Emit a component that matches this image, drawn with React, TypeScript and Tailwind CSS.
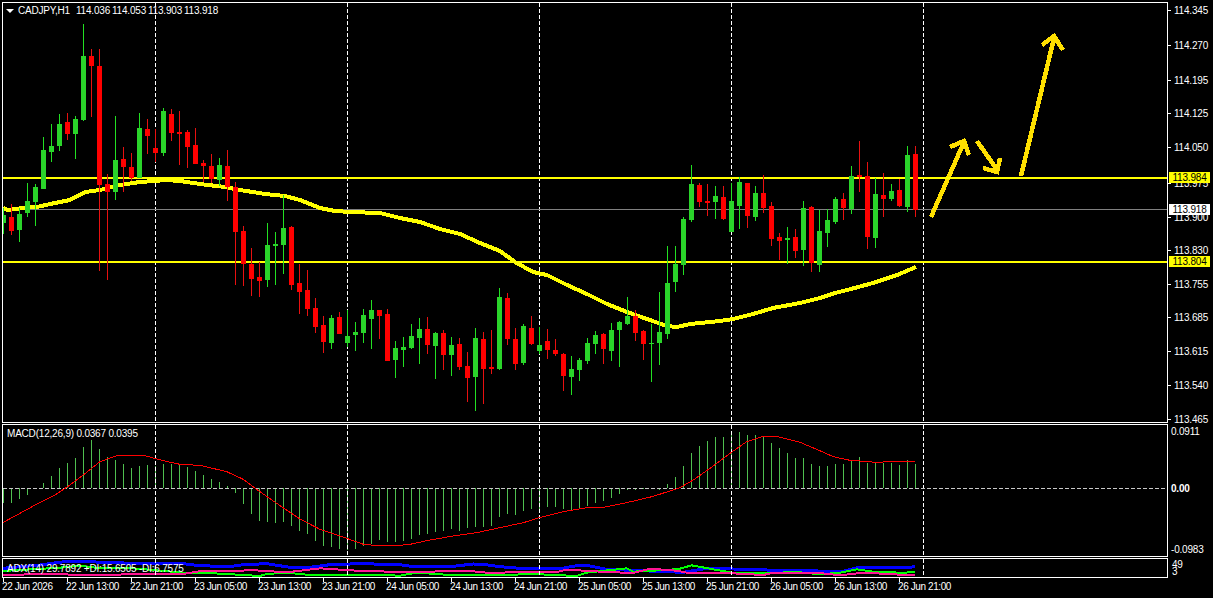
// CADJPY H1 chart with MACD and ADX sub windows
type Candle = [number, number, number, number, "g" | "r"];
type Point = [number, number];

// wick top, wick bottom, body top, body bottom (page pixels), one every 8px from x=3
const candles: Candle[] = [
  [208, 234, 215, 223, "g"], [204, 235, 217, 231, "r"], [208, 242, 214, 230, "g"], [183, 217, 201, 213, "g"],
  [184, 226, 187, 202, "g"], [137, 189, 150, 189, "g"], [124, 162, 146, 152, "g"], [114, 151, 124, 146, "g"],
  [113, 140, 122, 134, "r"], [116, 159, 119, 134, "g"], [24, 121, 56, 120, "g"], [49, 117, 56, 66, "r"],
  [49, 271, 66, 185, "r"], [174, 280, 184, 192, "r"], [116, 200, 160, 192, "g"], [147, 192, 159, 167, "r"],
  [153, 181, 167, 178, "r"], [113, 178, 128, 178, "g"], [119, 154, 129, 136, "r"], [129, 162, 148, 153, "r"],
  [108, 156, 111, 153, "g"], [109, 141, 114, 133, "r"], [111, 165, 132, 134, "r"], [130, 168, 132, 147, "r"],
  [128, 164, 145, 164, "r"], [160, 182, 163, 166, "r"], [154, 183, 166, 179, "r"], [158, 186, 165, 180, "g"],
  [150, 201, 166, 187, "r"], [182, 285, 187, 232, "r"], [226, 286, 231, 264, "r"], [248, 296, 264, 279, "r"],
  [262, 297, 277, 281, "r"], [223, 287, 245, 280, "g"], [232, 285, 244, 246, "g"], [195, 274, 228, 245, "g"],
  [226, 290, 227, 285, "r"], [264, 314, 283, 292, "r"], [270, 316, 290, 309, "r"], [298, 333, 308, 327, "r"],
  [316, 353, 325, 342, "r"], [315, 349, 318, 343, "g"], [312, 334, 317, 334, "r"], [310, 347, 336, 343, "g"],
  [322, 351, 332, 335, "g"], [309, 343, 315, 333, "g"], [300, 349, 310, 319, "g"], [310, 339, 310, 316, "r"],
  [309, 361, 314, 361, "r"], [341, 378, 348, 360, "g"], [337, 367, 347, 350, "g"], [324, 349, 336, 348, "g"],
  [318, 364, 329, 338, "g"], [317, 354, 329, 345, "r"], [332, 379, 333, 346, "g"], [330, 370, 333, 355, "r"],
  [337, 376, 345, 355, "g"], [338, 370, 344, 367, "r"], [352, 402, 366, 378, "r"], [328, 411, 338, 377, "g"],
  [332, 404, 339, 369, "r"], [330, 374, 367, 369, "r"], [288, 370, 297, 369, "g"], [293, 345, 298, 339, "r"],
  [328, 370, 339, 364, "r"], [324, 365, 326, 363, "g"], [316, 345, 328, 344, "r"], [327, 354, 345, 351, "g"],
  [329, 359, 341, 350, "r"], [339, 356, 350, 354, "r"], [353, 391, 354, 376, "r"], [356, 395, 369, 377, "g"],
  [358, 381, 360, 370, "g"], [338, 364, 343, 361, "g"], [331, 354, 335, 344, "g"], [333, 364, 334, 349, "r"],
  [323, 361, 330, 351, "g"], [321, 367, 322, 330, "g"], [297, 325, 316, 324, "g"], [310, 341, 316, 333, "r"],
  [330, 360, 331, 344, "r"], [324, 382, 343, 344, "g"], [292, 365, 332, 343, "g"], [246, 339, 283, 334, "g"],
  [246, 292, 264, 282, "g"], [217, 275, 219, 265, "g"], [165, 222, 184, 220, "g"], [183, 207, 185, 202, "r"],
  [184, 216, 201, 203, "r"], [186, 219, 196, 202, "g"], [186, 220, 197, 219, "r"], [183, 232, 201, 232, "g"],
  [177, 229, 182, 206, "g"], [183, 228, 183, 216, "r"], [186, 221, 193, 217, "g"], [175, 213, 193, 208, "r"],
  [202, 246, 206, 239, "r"], [233, 260, 237, 241, "r"], [227, 264, 238, 240, "g"], [229, 258, 237, 251, "r"],
  [201, 266, 208, 250, "g"], [206, 272, 207, 263, "r"], [210, 272, 231, 265, "g"], [209, 247, 220, 233, "g"],
  [197, 224, 199, 222, "g"], [193, 220, 199, 208, "r"], [166, 214, 176, 209, "g"], [141, 192, 175, 177, "r"],
  [162, 249, 176, 237, "r"], [178, 248, 194, 238, "g"], [173, 217, 195, 199, "r"], [184, 201, 191, 199, "g"],
  [179, 207, 190, 206, "r"], [146, 212, 155, 207, "g"], [146, 217, 154, 210, "r"],
];

const ma: Point[] = [
  [3, 208], [8, 210], [15, 209], [30, 207], [37, 207], [50, 204], [70, 200], [85, 192], [100, 190], [120, 185],
  [140, 182], [155, 181], [165, 180], [180, 181], [200, 184], [225, 187], [240, 190], [265, 194], [285, 196],
  [300, 200], [320, 208], [335, 211], [350, 212], [380, 213], [400, 218], [420, 222], [440, 229], [460, 234],
  [480, 243], [500, 251], [515, 262], [533, 272], [547, 275], [567, 285], [587, 294], [607, 304], [627, 312],
  [647, 319], [667, 326], [677, 327], [690, 324], [720, 321], [733, 319], [753, 314], [773, 308], [800, 303],
  [820, 298], [835, 293], [847, 290], [873, 283], [897, 275], [916, 267],
];

// histogram tops in the 3x crop scale (y = 420 + v / 3), zero sits at 488
const histogram = [
  250, 248, 236, 225, 208, 189, 168, 144, 129, 114, 81, 60, 87, 111, 120, 132, 144, 138, 135, 138, 132, 132, 135, 141,
  153, 165, 177, 186, 198, 219, 252, 282, 303, 306, 309, 306, 318, 333, 342, 363, 378, 381, 387, 390, 387, 378, 372,
  360, 366, 366, 363, 357, 345, 342, 336, 333, 327, 333, 324, 321, 321, 318, 291, 282, 285, 273, 267, 267, 261, 261,
  267, 270, 267, 258, 249, 243, 234, 222, 210, 210, 207, 207, 210, 192, 171, 138, 99, 78, 63, 51, 51, 42, 36, 45, 45,
  50, 69, 84, 99, 114, 114, 132, 138, 138, 132, 132, 123, 111, 129, 129, 129, 129, 135, 120, 132,
];

const scaled = (x0: number, pts: Point[]): Point[] => pts.map(([x, y]) => [x0 + x / 3, 420 + y / 3]);

const signal: Point[] = [
  ...scaled(0, [[10, 307], [100, 258], [160, 228], [200, 202], [250, 165], [300, 125], [350, 107], [430, 106], [490, 122], [540, 133], [600, 136], [680, 155], [730, 178], [770, 208], [830, 250], [900, 297], [960, 328], [1040, 355], [1090, 373], [1150, 378]]),
  ...scaled(400, [[0, 376], [30, 373], [90, 360], [160, 348], [230, 338], [290, 325], [370, 308], [418, 293], [490, 275], [560, 263], [610, 262], [680, 248], [760, 229], [840, 203], [880, 180], [930, 145], [990, 100], [1040, 65], [1090, 49], [1130, 49]]),
  ...scaled(800, [[0, 67], [50, 88], [100, 110], [150, 121], [210, 125], [230, 128], [260, 125], [345, 125]]),
];

const adxBlue: Point[] = [
  ...scaled(0, [[10, 445], [60, 440], [120, 435], [200, 424], [260, 425], [400, 430], [540, 430], [600, 437], [690, 440], [730, 434], [800, 431], [870, 442], [930, 442], [990, 434], [1080, 431]]),
  ...scaled(400, [[0, 434], [40, 440], [150, 440], [220, 432], [250, 433], [300, 440], [370, 446], [480, 446], [530, 437], [570, 438], [620, 448], [720, 452], [850, 457], [920, 445], [1000, 447], [1100, 450]]),
  ...scaled(800, [[0, 450], [30, 452], [120, 456], [170, 444], [320, 443], [345, 440]]),
];

const adxGreen: Point[] = [
  ...scaled(0, [[10, 453], [60, 450], [180, 443], [240, 437], [300, 445], [400, 445], [550, 458], [600, 458], [680, 462], [780, 468], [800, 462], [860, 458], [920, 464], [1000, 466], [1100, 464]]),
  ...scaled(400, [[0, 467], [50, 458], [150, 465], [280, 466], [400, 462], [530, 468], [560, 458], [680, 445], [700, 455], [800, 450], [840, 446], [875, 436], [940, 448], [1000, 458], [1100, 458]]),
  ...scaled(800, [[0, 457], [60, 463], [120, 458], [170, 448], [220, 455], [300, 458], [345, 457]]),
];

const adxPink: Point[] = [
  ...scaled(0, [[10, 465], [60, 464], [130, 461], [250, 465], [400, 463], [550, 462], [610, 452], [700, 454], [750, 450], [860, 457], [960, 445], [1070, 452]]),
  ...scaled(400, [[0, 456], [50, 456], [200, 452], [280, 460], [350, 455], [470, 456], [500, 449], [620, 456], [700, 459], [750, 446], [830, 452], [870, 460], [1000, 460], [1090, 465], [1120, 458]]),
  ...scaled(800, [[0, 458], [60, 459], [120, 466], [190, 458], [300, 464], [345, 466]]),
];

const prices: [string, number][] = [
  ["114.345", 10], ["114.270", 45], ["114.195", 80], ["114.125", 113], ["114.050", 147], ["113.975", 183],
  ["113.900", 217], ["113.830", 250], ["113.755", 284], ["113.685", 317], ["113.615", 351], ["113.540", 385],
  ["113.465", 419],
];

const tags: [string, number, string][] = [
  ["113.984", 172, "bg-[#ffff00]"],
  ["113.918", 204, "bg-white"],
  ["113.804", 256, "bg-[#ffff00]"],
];

const times = [
  "22 Jun 2026", "22 Jun 13:00", "22 Jun 21:00", "23 Jun 05:00", "23 Jun 13:00", "23 Jun 21:00", "24 Jun 05:00",
  "24 Jun 13:00", "24 Jun 21:00", "25 Jun 05:00", "25 Jun 13:00", "25 Jun 21:00", "26 Jun 05:00", "26 Jun 13:00",
  "26 Jun 21:00",
];

const grid = [155, 347, 539, 731, 923];

const line = (pts: Point[]) => pts.map((p) => p.join(",")).join(" ");

function GridLines({ top, bottom }: { top: number; bottom: number }) {
  return (
    <>
      {grid.map((x) => (
        <line key={x} x1={x + 0.5} x2={x + 0.5} y1={top} y2={bottom} stroke="#fff" strokeDasharray="4 2" />
      ))}
    </>
  );
}

function Arrow({ d }: { d: string }) {
  return <path d={d} fill="none" stroke="#ffe000" strokeWidth={4.5} strokeLinejoin="miter" />;
}

function MainChart() {
  return (
    <svg className="block h-full w-full" viewBox="3 3 1164 419" shapeRendering="crispEdges">
      <GridLines top={3} bottom={422} />
      <rect x={3} y={209} width={1164} height={1} fill="#808080" />
      <polyline points={line(ma)} fill="none" stroke="#ffff00" strokeWidth={4} />
      <Arrow d="M931 217 L964 142 M950 147 L964 141 L969 155" />
      <Arrow d="M977 141 L998 171 M983 168 L997 172 L1000 158" />
      <Arrow d="M1021 176 L1054 38 M1042 45 L1054 36 L1063 50" />
      <rect x={3} y={177} width={1164} height={2} fill="#ffff00" />
      <rect x={3} y={261} width={1164} height={2} fill="#ffff00" />
      {candles.map(([hi, lo, top, bottom, c], i) => {
        const x = 3 + i * 8;
        return (
          <g key={i}>
            <rect x={x} y={hi} width={1} height={lo - hi} fill={c === "g" ? "#22e022" : "#e81010"} />
            <rect x={x - 2} y={top} width={5} height={bottom - top} fill={c === "g" ? "#2ad42a" : "#ff0000"} />
          </g>
        );
      })}
    </svg>
  );
}

function MacdChart() {
  return (
    <svg className="block h-full w-full" viewBox="3 425 1164 131" shapeRendering="crispEdges">
      {histogram.map((v, i) => {
        const y = 420 + v / 3;
        return (
          <rect key={i} x={3 + i * 8} y={Math.min(y, 488)} width={1} height={Math.abs(y - 488)} fill="#4fbf4f" />
        );
      })}
      <GridLines top={425} bottom={556} />
      <line x1={3} x2={1167} y1={488.5} y2={488.5} stroke="#c8c8c8" strokeDasharray="4 2" />
      <polyline points={line(signal)} fill="none" stroke="#ff0000" strokeWidth={1} />
    </svg>
  );
}

function AdxChart() {
  return (
    <svg className="block h-full w-full" viewBox="3 559 1164 18" shapeRendering="crispEdges">
      <polyline points={line(adxBlue)} fill="none" stroke="#0000ff" strokeWidth={3} />
      <polyline points={line(adxGreen)} fill="none" stroke="#00ff00" strokeWidth={2} />
      <polyline points={line(adxPink)} fill="none" stroke="#ff1493" strokeWidth={2} />
      <GridLines top={559} bottom={575} />
    </svg>
  );
}

export default function App() {
  return (
    <div className="flex h-[598px] w-[1213px] flex-col overflow-hidden bg-black pt-[2px] font-['Liberation_Sans',Arial,sans-serif] text-[10px] leading-none tracking-[-0.2px] text-white">
      {/* price window */}
      <div className="flex h-[421px] shrink-0">
        <div className="relative ml-[2px] w-[1166px] border border-white">
          <MainChart />
          <div className="absolute left-[3px] top-[3px] flex items-center">
            <span className="h-0 w-0 border-x-[4px] border-t-[4px] border-x-transparent border-t-white" />
            <span className="ml-[4px] w-[58px]">CADJPY,H1</span>
            <span className="w-[36px]">114.036</span>
            <span className="w-[36px]">114.053</span>
            <span className="w-[36px]">113.903</span>
            <span>113.918</span>
          </div>
        </div>
        <div className="relative flex-1">
          {prices.map(([p, y]) => (
            <div key={p} className="absolute left-0 flex h-[11px] items-center" style={{ top: y - 7 }}>
              <span className="mr-[3px] h-px w-[3px] bg-white" />
              {p}
            </div>
          ))}
          {tags.map(([p, y, bg]) => (
            <div key={p} className={`absolute left-[1px] flex h-[11px] w-[41px] items-center justify-center text-black ${bg}`} style={{ top: y - 2 }}>
              {p}
            </div>
          ))}
        </div>
      </div>

      {/* macd window */}
      <div className="mt-[1px] flex h-[133px] shrink-0">
        <div className="relative ml-[2px] w-[1166px] border border-white">
          <MacdChart />
          <span className="absolute left-[4px] top-[4px]">MACD(12,26,9) 0.0367 0.0395</span>
        </div>
        <div className="relative flex-1">
          <span className="absolute left-[3px] top-[3px]">0.0911</span>
          <span className="absolute left-[3px] top-[60px] font-bold">0.00</span>
          <span className="absolute left-[3px] top-[121px]">-0.0983</span>
        </div>
      </div>

      {/* adx window */}
      <div className="mt-[1px] flex h-[20px] shrink-0">
        <div className="relative ml-[2px] w-[1166px] border border-white">
          <AdxChart />
          <span className="absolute left-[4px] top-[5px]">ADX(14) 29.7892 +DI:15.6505 -DI:6.7575</span>
        </div>
        <div className="relative flex-1">
          <span className="absolute left-[4px] top-[2px]">49</span>
          <span className="absolute left-[4px] top-[9px]">3</span>
        </div>
      </div>

      {/* time axis */}
      <div className="flex pl-[3px] tracking-[-0.4px]">
        {times.map((t) => (
          <div key={t} className="w-[64px] shrink-0">
            <div className="h-[4px] w-px bg-white" />
            <div className="-ml-[1px] whitespace-nowrap">{t}</div>
          </div>
        ))}
      </div>
    </div>
  );
}
